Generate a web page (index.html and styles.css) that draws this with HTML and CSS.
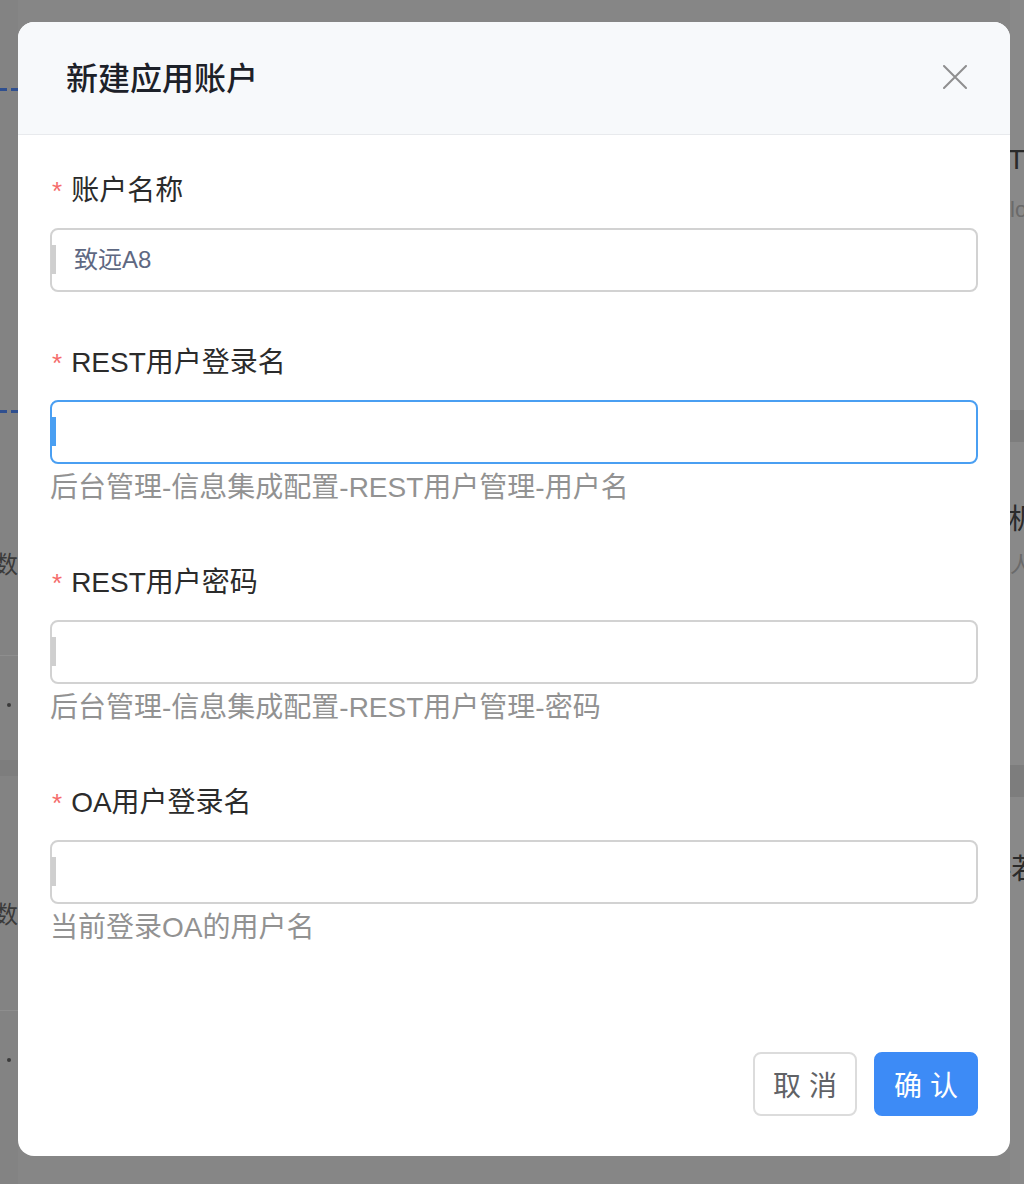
FILE: index.html
```html
<!DOCTYPE html>
<html lang="zh-CN">
<head>
<meta charset="utf-8">
<title>新建应用账户</title>
<link rel="stylesheet" href="styles.css">
</head>
<body>
<div class="page">
  <div class="bg-col bg-left">
    <div class="dash dash-1"></div>
    <div class="dash dash-2"></div>
    <div class="bg-txt bg-txt-1">数</div>
    <div class="bg-sep bg-sep-1"></div>
    <div class="bg-dot"></div>
    <div class="bg-band"></div>
    <div class="bg-txt bg-txt-2">数</div>
    <div class="bg-sep bg-sep-2"></div>
    <div class="bg-dot"></div>
  </div>
  <div class="bg-col bg-right">
    <div class="bg-rt bg-rt-1">T-</div>
    <div class="bg-rs bg-rs-1">lo</div>
    <div class="bg-band bg-band-r1"></div>
    <div class="bg-rt bg-rt-2">机</div>
    <div class="bg-rs bg-rs-2">人</div>
    <div class="bg-band bg-band-r2"></div>
    <div class="bg-rt bg-rt-3">-若</div>
  </div>
</div>
<div class="mask">
  <div class="dialog">
    <div class="dialog-header">
      <span class="dialog-title">新建应用账户</span>
      <span class="dialog-close">
        <svg width="24" height="24" viewBox="0 0 24 24"><path d="M1 1 L23 23 M23 1 L1 23" stroke="#8f8f8f" stroke-width="2" fill="none" stroke-linecap="round"/></svg>
      </span>
    </div>
    <div class="dialog-body">
      <div class="form-item">
        <div class="form-label"><span class="req">*</span>账户名称</div>
        <div class="input"><span class="input-value">致远A8</span></div>
      </div>
      <div class="form-item">
        <div class="form-label"><span class="req">*</span>REST用户登录名</div>
        <div class="input is-focus"></div>
        <div class="form-help">后台管理-信息集成配置-REST用户管理-用户名</div>
      </div>
      <div class="form-item">
        <div class="form-label"><span class="req">*</span>REST用户密码</div>
        <div class="input"></div>
        <div class="form-help">后台管理-信息集成配置-REST用户管理-密码</div>
      </div>
      <div class="form-item">
        <div class="form-label"><span class="req">*</span>OA用户登录名</div>
        <div class="input"></div>
        <div class="form-help">当前登录OA的用户名</div>
      </div>
    </div>
    <div class="dialog-footer">
      <button class="btn">取 消</button>
      <button class="btn btn-primary">确 认</button>
    </div>
  </div>
</div>
</body>
</html>
```
FILE: styles.css
```css
* { box-sizing: border-box; }
html, body { margin: 0; padding: 0; }
body {
  width: 1024px;
  height: 1184px;
  overflow: hidden;
  position: relative;
  background: #868686;
  font-family: "Liberation Sans", "Noto Sans CJK SC", sans-serif;
}

/* background page (under the mask) */
.page {
  height: 1184px;
  display: flex;
  justify-content: space-between;
}
.bg-col { width: 18px; display: flex; flex-direction: column; overflow: hidden; }
.bg-left { background: #838383; }
.bg-right { width: 14px; background: #898989; }
.dash {
  height: 3px;
  flex: none;
  background: repeating-linear-gradient(90deg, #2f4f8f 0 7px, transparent 7px 11px);
}
.dash-1 { margin-top: 88px; }
.dash-2 { margin-top: 319px; }
.bg-txt { font-size: 24px; color: #3a3a3a; margin-left: -6px; line-height: 30px; flex: none; }
.bg-txt-1 { margin-top: 137px; }
.bg-txt-2 { margin-top: 124px; }
.bg-sep { height: 1px; background: #8e8e8e; flex: none; }
.bg-sep-1 { margin-top: 75px; }
.bg-sep-2 { margin-top: 80px; }
.bg-dot { width: 4px; height: 4px; border-radius: 50%; background: #3a3a3a; margin: 47px 0 0 7px; flex: none; }
.bg-band { height: 16px; background: #7d7d7d; margin-top: 53px; flex: none; }
.bg-rt { font-size: 28px; color: #2a2a2a; line-height: 30px; white-space: nowrap; margin-left: -2px; flex: none; }
.bg-rt-1 { margin-top: 145px; }
.bg-rs { font-size: 22px; color: #6a6a6a; line-height: 26px; white-space: nowrap; flex: none; }
.bg-rs-1 { margin-top: 22px; }
.bg-rs-2 { margin-top: 17px; }
.bg-band-r1 { height: 32px; margin-top: 187px; }
.bg-rt-2 { margin-top: 63px; }
.bg-band-r2 { height: 32px; margin-top: 187px; }
.bg-rt-3 { margin-top: 58px; margin-left: -8px; }

/* mask + dialog */
.mask {
  position: absolute;
  left: 0; top: 0;
  width: 1024px;
  height: 1184px;
  padding: 22px 14px 0 18px;
}
.dialog {
  width: 992px;
  height: 1134px;
  background: #fff;
  border-radius: 16px;
  overflow: hidden;
  display: flex;
  flex-direction: column;
}
.dialog-header {
  height: 113px;
  flex: none;
  background: #f7f9fb;
  border-bottom: 1px solid #e8eaed;
  display: flex;
  align-items: center;
  justify-content: space-between;
  padding: 0 43px 5px 48px;
}
.dialog-title {
  font-size: 32px;
  font-weight: 500;
  color: #1d2129;
}
.dialog-close { width: 24px; height: 24px; display: block; margin-top: 2px; }
.dialog-close svg { display: block; }

.dialog-body { padding: 36px 32px 0; }
.form-item { margin-bottom: 51px; }
.form-label {
  font-size: 28px;
  line-height: 40px;
  color: #2b2b2b;
  margin-bottom: 17px;
}
.req { color: #f56c6c; margin-right: 9px; margin-left: 2px; font-size: 26px; }
.input {
  position: relative;
  height: 64px;
  border: 2px solid #d2d2d2;
  border-radius: 8px;
  padding: 0 22px 5px;
  display: flex;
  align-items: center;
}
.input::before {
  content: "";
  position: absolute;
  left: -1px;
  top: 15px;
  width: 5px;
  height: 29px;
  background: #cfcfcf;
}
.input.is-focus { border-color: #4a9ff2; }
.input.is-focus::before { background: #4a9ff2; }
.input-value { font-size: 24px; color: #5e6882; }
.form-help {
  font-size: 28px;
  line-height: 48px;
  color: #929292;
}

.dialog-footer {
  margin-top: auto;
  display: flex;
  justify-content: flex-end;
  gap: 17px;
  padding: 0 32px 40px;
}
.btn {
  width: 104px;
  height: 64px;
  border-radius: 8px;
  border: 2px solid #dcdcdc;
  background: #fff;
  color: #606266;
  font-family: "Liberation Sans", "Noto Sans CJK SC", sans-serif;
  font-size: 28px;
  padding: 0;
}
.btn-primary { background: #3d8bf6; border-color: #3d8bf6; color: #fff; }
```
